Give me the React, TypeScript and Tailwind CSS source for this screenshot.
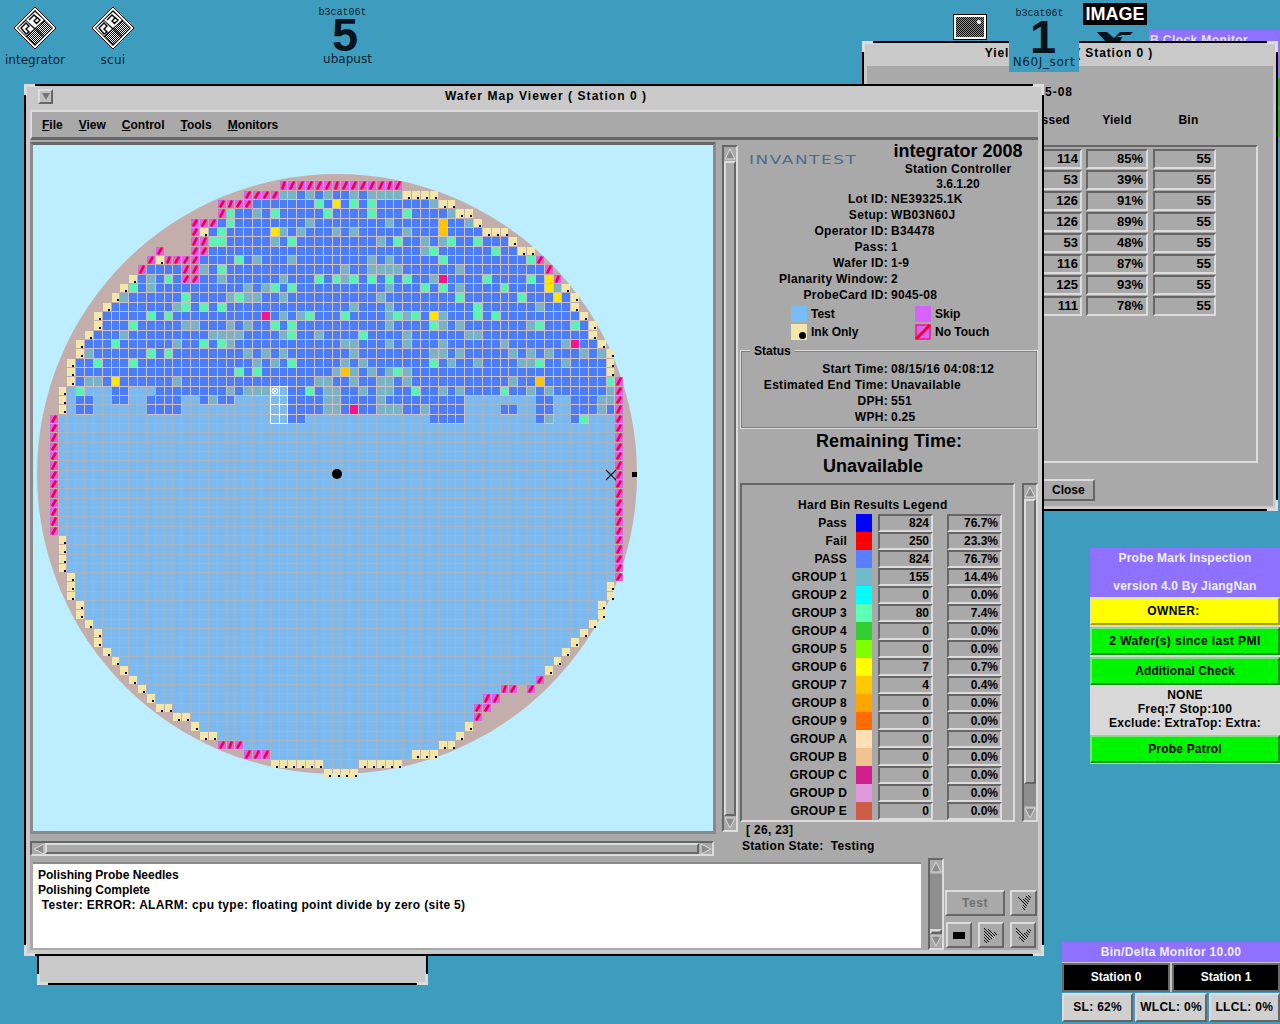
import React from 'react';

const raised = 'border-2 border-t-[#dcdcdc] border-l-[#dcdcdc] border-b-[#666666] border-r-[#666666]';
const sunken = 'border-2 border-t-[#666666] border-l-[#666666] border-b-[#dcdcdc] border-r-[#dcdcdc]';

// Wafer rows: "min max tokens", token = type letter + column or column range
// s skip, i ink, g green, t teal, y yellow, o orange, p pink, l untested, n nothing
const topRows = [
  '26 39 s26-39',
  '22 43 s22-25 t26-27 t29 t31 t34 t36-39 i40-43',
  '19 45 s19-22 g30 y32 g34 g36 t43 i44-45',
  '19 47 s19 g20 t23 g25 g31 g36 g40 t45 i46-47',
  '16 48 s16-18 g20 t29 t38 o44 t47 i48',
  '16 51 s16 i17 g19 y25 t26 t28 t32 t34 t40 o44 i49-51',
  '16 52 s16-17 g18-19 t25 g27 t37 g39 t42 t44 g45 g48 i52',
  '12 54 s12 n13-15 s16-17 t42 g43 g50 i53-54',
  '11 55 s11 i12 s13-16 g21 t23 t27 t36 t38 g44 g54 s55',
  '10 56 s10 s15-16 t17 g19 t33 t36-39 t46 s56',
  '9 57 i9 t11 g13 s15-16 t19 t26 g30 g32 t33 g34 g36 g38 g40 t43 p44 g49 g54 y56 s57',
  '8 58 i8 g9 t11 t22 t24 g25 g27 t38 g42 g44 t46 g51 y56 t57 i58',
  '7 59 i7 t8 g15 t20 g21 t22-23 t26 t37 g46 g53 y57 i59',
  '6 59 i6 t14 g15 g17 g19 t34 t38 g48 t55 i59',
  '5 60 i5 g11 g13 p24 t26 t28 g29 g33 t38 g39 t40 g41 y43 t44 g48 g50 i60',
  '5 61 i5 g9 t15-16 t20 t22 g25 g27 t38 g43 t44 t46 t54 g55 g59 i61',
  '4 61 i4 t8 t18-21 t26 g27 t30 g35 t40 t47-48 i61',
  '3 62 i3 g7 t14 g17 g19 t20 t33-34 t38 t40 t44 t51 t58 p59 i62',
  '3 63 i3 t4 g11 g13 t22 t24 t26 t34 t43-44 t46 t52 t54 t56 t60 t62 i63',
  '2 63 i2 g5 g9 t23 t25 g27 t33 t35 g43 t45 t48 t53-54 g55 t58 i63',
  '2 63 i2 g21 g23 t32 o33 t34 t36 t38 g39 t40 i63',
  '2 64 i2 t4-5 y7 t14 t30-31 t34 t37-38 t40 t52 o55 g63 s64',
  '1 64 i1 l2 g3 l4-6 l9-11 t20 t22-24 l25-26 g29 t31-32 t35 t37-38 g41 t44 t46 g51 t54 t56 t63 s64',
  '1 64 i1 l2 l5-6 l9-10 l15-16 t18 l21-26 t31-32 t37 l47-54 l57-58 t62-63 s64',
  '1 64 i1 l2 l5-10 l15-26 t31-32 p34 t37-39 t42 l47-50 l53-54 l57-58 t62 s64',
  '0 64 s0 l1-26 l29-42 l47-54 t56 l57-58 g60 l61-63 s64',
];

const bottomRows = [
  ...Array(12).fill('0 64 s0 s64'),
  ...Array(4).fill('1 64 i1 s64'),
  '2 64 i2 s64',
  '2 63 i2 i63',
  '2 63 i2 i63',
  '3 62 i3 i62',
  '3 62 i3 i62',
  '4 61 i4 i61',
  '5 60 i5 i60',
  '5 59 i5 i59',
  '6 58 i6 i58',
  '7 57 i7 i57',
  '8 56 i8 i56',
  '9 55 i9 s55',
  '10 54 i10 s51-52 n53 s54',
  '11 50 i11 s49-50',
  '12 49 i12-13 s48-49',
  '14 48 i14-15 s48',
  '16 47 i16 i47',
  '17 46 i17-18 i46',
  '19 45 s19-21 i44-45',
  '22 43 s22-24 i41-43',
  '25 39 i25-30 i35-39',
  '31 34 i31-34',
];

const cellColors: Record<string, string> = {
  b: '#4a7df7',
  l: '#7bb9ee',
  t: '#78b4c6',
  g: '#5cf2b2',
  y: '#ffe600',
  o: '#ffc400',
  p: '#f5148c',
  s: '#d763f2',
  i: '#f2e6a8',
};

const cellX = (k: number) => Math.round(49.7 + 8.84 * k);
const cellY = (r: number) => Math.round(181.3 + 9.33 * r);

type Cell = { r: number; k: number; type: string };

const buildCells = (): Cell[] => {
  const cells: Cell[] = [];
  [...topRows, ...bottomRows].forEach((line, r) => {
    const [min, max, ...tokens] = line.split(' ');
    const types: Record<number, string> = {};
    for (let k = Number(min); k <= Number(max); k++) types[k] = r < topRows.length ? 'b' : 'l';
    tokens.forEach((token) => {
      const [from, to] = token.slice(1).split('-').map(Number);
      for (let k = from; k <= (to ?? from); k++) types[k] = token[0];
    });
    Object.keys(types).forEach((key) => {
      const k = Number(key);
      if (types[k] !== 'n') cells.push({ r, k, type: types[k] });
    });
  });
  return cells;
};

const WaferMap = () => (
  <svg width="680" height="686" viewBox="33 145 680 686" shapeRendering="crispEdges" className="block">
    <rect x="33" y="145" width="680" height="686" fill="#bdeeff" />
    <circle cx="337" cy="474" r="300" fill="#c4aeab" shapeRendering="auto" />
    {buildCells().map(({ r, k, type }) => {
      const x = cellX(k);
      const y = cellY(r);
      const w = cellX(k + 1) - x - 1;
      const h = cellY(r + 1) - y - 1;
      return (
        <g key={`${r}-${k}`}>
          {type === 'l' && <rect x={x} y={y} width={w + 1} height={h + 1} fill="#a4b4c4" />}
          {'btgyop'.includes(type) && <rect x={x} y={y} width={w + 1} height={h + 1} fill="#cdc2c8" />}
          <rect x={x} y={y} width={w} height={h} fill={cellColors[type]} />
          {type === 's' && (
            <line x1={x + 2.5} y1={y + h - 1.5} x2={x + w - 2.5} y2={y + 1.5} stroke="#f50032" strokeWidth="2.6" strokeLinecap="round" shapeRendering="auto" />
          )}
          {type === 'i' && <rect x={x + 5} y={y + 6} width="2" height="2" fill="#000" />}
        </g>
      );
    })}
    {[22, 23, 24, 25].map((r) =>
      [25, 26].map((k) => (
        <rect key={`m${r}-${k}`} x={cellX(k) - 0.5} y={cellY(r) - 0.5} width={cellX(k + 1) - cellX(k)} height={cellY(r + 1) - cellY(r)} fill="none" stroke="#fff" />
      ))
    )}
    <g shapeRendering="auto" stroke="#fff" fill="none">
      <circle cx={cellX(25) + 4} cy={cellY(22) + 4} r="3" />
      <path d={`M${cellX(25) + 2} ${cellY(22) + 2}l4 4m0 -4l-4 4`} />
    </g>
    <circle cx="337" cy="474" r="5" fill="#000" shapeRendering="auto" />
    <path d="M606 470l10 10m0 -10l-10 10" stroke="#0a1a2a" strokeWidth="1.2" fill="none" shapeRendering="auto" />
    <rect x="632" y="472" width="5" height="5" fill="#000" />
  </svg>
);

const Corner = ({ className }: { className: string }) => (
  <div className={`absolute w-[11px] h-[11px] border-[#dcdcdc] ${className}`} />
);

const Triangle = ({ dir }: { dir: 'up' | 'down' | 'left' | 'right' }) => {
  const points = {
    up: '6,1 11,11 1,11',
    down: '1,1 11,1 6,11',
    left: '1,6 11,1 11,11',
    right: '1,1 11,6 1,11',
  }[dir];
  return (
    <svg width="12" height="12" viewBox="0 0 12 12" className="block">
      <polygon points={points} fill="#8c8c8c" stroke="#dcdcdc" strokeWidth="1" />
    </svg>
  );
};

const VScroll = ({ className, variant }: { className: string; variant: 'full' | 'legend' | 'log' }) => (
  <div className={`flex flex-col items-center bg-[#8e8e8e] ${sunken} ${className}`}>
    <div className="h-[14px] w-full flex items-center justify-center bg-[#a9a9a9] shrink-0">
      <Triangle dir="up" />
    </div>
    {variant === 'log' && <div className="flex-1" />}
    <div className={`w-full bg-[#a9a9a9] ${raised} ${variant === 'log' ? 'h-[5px]' : 'flex-1'}`} />
    {variant === 'legend' && <div className="h-[22px]" />}
    <div className="h-[14px] w-full flex items-center justify-center bg-[#a9a9a9] shrink-0">
      <Triangle dir="down" />
    </div>
  </div>
);

const infoRows = [
  ['Lot ID:', 'NE39325.1K'],
  ['Setup:', 'WB03N60J'],
  ['Operator ID:', 'B34478'],
  ['Pass:', '1'],
  ['Wafer ID:', '1-9'],
  ['Planarity Window:', '2'],
  ['ProbeCard ID:', '9045-08'],
];

const statusRows = [
  ['Start Time:', '08/15/16 04:08:12'],
  ['Estimated End Time:', 'Unavailable'],
  ['DPH:', '551'],
  ['WPH:', '0.25'],
];

const legendRows = [
  ['Pass', 'bg-[#0000ff]', '824', '76.7%'],
  ['Fail', 'bg-[#ff0000]', '250', '23.3%'],
  ['PASS', 'bg-[#5a80ff]', '824', '76.7%'],
  ['GROUP 1', 'bg-[#70b8cc]', '155', '14.4%'],
  ['GROUP 2', 'bg-[#00ffff]', '0', '0.0%'],
  ['GROUP 3', 'bg-[#5cffb4]', '80', '7.4%'],
  ['GROUP 4', 'bg-[#32cd32]', '0', '0.0%'],
  ['GROUP 5', 'bg-[#7fff00]', '0', '0.0%'],
  ['GROUP 6', 'bg-[#ffff00]', '7', '0.7%'],
  ['GROUP 7', 'bg-[#ffc800]', '4', '0.4%'],
  ['GROUP 8', 'bg-[#ffa500]', '0', '0.0%'],
  ['GROUP 9', 'bg-[#ff6c00]', '0', '0.0%'],
  ['GROUP A', 'bg-[#ffe0b4]', '0', '0.0%'],
  ['GROUP B', 'bg-[#f0c490]', '0', '0.0%'],
  ['GROUP C', 'bg-[#d0208c]', '0', '0.0%'],
  ['GROUP D', 'bg-[#e09adc]', '0', '0.0%'],
  ['GROUP E', 'bg-[#cd5c48]', '0', '0.0%'],
];

const yieldRows = [
  ['114', '85%'],
  ['53', '39%'],
  ['126', '91%'],
  ['126', '89%'],
  ['53', '48%'],
  ['116', '87%'],
  ['125', '93%'],
  ['111', '78%'],
];

const menuItems = ['File', 'View', 'Control', 'Tools', 'Monitors'];

const InfoPanel = () => (
  <div className="w-[298px] ml-[2px] pt-px flex flex-col">
    <div className="flex h-[50px]">
      <div className="w-[151px] pl-[9px] pt-[11px]">
        <div className="origin-left scale-x-[1.3] font-['DejaVu_Sans',sans-serif] font-normal text-[13px] leading-[15px] tracking-[1.2px] text-[#4a6c90] whitespace-nowrap">
          INVANTEST
        </div>
      </div>
      <div className="w-[134px] flex flex-col items-center whitespace-nowrap">
        <div className="text-[18px] leading-[21px]">integrator 2008</div>
        <div className="leading-[15px] tracking-[0.3px]">Station Controller</div>
        <div className="leading-[14px]">3.6.1.20</div>
      </div>
    </div>
    {infoRows.map(([label, value]) => (
      <div key={label} className="grid grid-cols-[148px_1fr] gap-x-[3px] h-[16px] leading-[16px] tracking-[0.3px]">
        <span className="text-right whitespace-nowrap">{label}</span>
        <span>{value}</span>
      </div>
    ))}
    <div className="grid grid-cols-[124px_124px] ml-[51px] mt-[2px] h-[36px]">
      <div className="flex items-center gap-[4px] h-[18px]">
        <div className="w-[16px] h-[16px] bg-[#78bcf5]" />
        Test
      </div>
      <div className="flex items-center gap-[4px] h-[18px]">
        <div className="w-[16px] h-[16px] bg-[#d763ff]" />
        Skip
      </div>
      <div className="flex items-center gap-[4px] h-[18px]">
        <div className="w-[16px] h-[16px] bg-[#f2e6a8] flex items-end justify-end p-[1px]">
          <div className="w-[7px] h-[7px] rounded-full bg-black" />
        </div>
        Ink Only
      </div>
      <div className="flex items-center gap-[4px] h-[18px]">
        <svg width="16" height="16" viewBox="0 0 16 16" className="block">
          <rect x="1" y="1" width="14" height="14" fill="#d763f2" stroke="#f5148c" strokeWidth="1.5" />
          <line x1="1" y1="15" x2="15" y2="1" stroke="#f50032" strokeWidth="3" />
        </svg>
        No Touch
      </div>
    </div>
    <div className="relative mt-[9px] h-[79px] w-[298px] border border-[#dcdcdc] outline outline-1 outline-offset-[-2px] outline-[#808080] pt-[10px]">
      <span className="absolute left-[9px] top-[-7px] px-[4px] bg-[#a9a9a9] leading-[14px]">Status</span>
      {statusRows.map(([label, value]) => (
        <div key={label} className="grid grid-cols-[147px_1fr] gap-x-[3px] h-[16px] leading-[16px] tracking-[0.3px]">
          <span className="text-right whitespace-nowrap">{label}</span>
          <span>{value}</span>
        </div>
      ))}
    </div>
    <div className="h-[25px] leading-[25px] text-[18px] tracking-[0.1px] pl-[76px] whitespace-nowrap">Remaining Time:</div>
    <div className="h-[25px] leading-[25px] text-[18px] pl-[83px] whitespace-nowrap">Unavailable</div>
    <div className="flex mt-[4px] h-[339px]">
      <div className={`w-[275px] h-full overflow-hidden ${sunken} pt-[12px]`}>
        <div className="h-[17px] leading-[16px] pl-[56px] tracking-[0.3px] whitespace-nowrap">Hard Bin Results Legend</div>
        {legendRows.map(([label, color, count, pct]) => (
          <div key={label} className="flex items-center h-[18px] shrink-0">
            <span className="w-[105px] text-right whitespace-nowrap tracking-[0.2px]">{label}</span>
            <div className={`ml-[9px] w-[16px] h-[18px] ${color}`} />
            <div className={`ml-[6px] w-[55px] h-[18px] text-right pr-[2px] leading-[14px] ${sunken}`}>{count}</div>
            <div className={`ml-[14px] w-[55px] h-[18px] text-right pr-[2px] leading-[14px] ${sunken}`}>{pct}</div>
          </div>
        ))}
      </div>
      <VScroll variant="legend" className="ml-[7px] w-[16px] h-full" />
    </div>
    <div className="h-[16px] leading-[16px] pl-[6px] tracking-[0.3px]">[ 26, 23]</div>
    <div className="h-[17px] leading-[17px] pl-[2px] whitespace-pre tracking-[0.3px]">Station State:  Testing</div>
  </div>
);

// Stippled button glyphs: a hatch filled polygon
const HatchIcon = ({ id, points }: { id: string; points: string }) => (
  <svg width="22" height="22" viewBox="0 0 22 22" shapeRendering="crispEdges" className="block">
    <defs>
      <pattern id={id} width="3" height="3" patternUnits="userSpaceOnUse">
        <rect x="0" y="0" width="1" height="1" fill="#000" />
        <rect x="1" y="1" width="1" height="1" fill="#000" />
        <rect x="2" y="2" width="1" height="1" fill="#000" />
      </pattern>
    </defs>
    <polygon points={points} fill={`url(#${id})`} />
  </svg>
);

const MainWindow = () => (
  <div className="absolute left-[24px] top-[84px] w-[1020px] h-[872px] border-2 border-black bg-[#c9c9c9] px-[4px] flex flex-col">
    <Corner className="left-[-2px] top-[-2px] border-l-[3px] border-t-[3px]" />
    <Corner className="left-[-2px] bottom-[-2px] border-l-[3px] border-b-[3px]" />
    <Corner className="right-[-2px] top-[-2px] border-r-[3px] border-t-[3px]" />
    <Corner className="right-[-2px] bottom-[-2px] border-r-[3px] border-b-[3px]" />
    <div className="relative h-[22px] flex items-center justify-center pl-[24px] pb-[3px] tracking-[1.05px] whitespace-nowrap shrink-0">
      <div className={`absolute left-[8px] top-[3px] w-[15px] h-[15px] bg-[#c0c0c0] ${raised} flex items-center justify-center`}>
        <span className="w-0 h-0 border-l-[4px] border-r-[4px] border-t-[7px] border-l-transparent border-r-transparent border-t-[#777777]" />
      </div>
      Wafer Map Viewer ( Station 0 )
    </div>
    <div className="mt-[2px] h-[30px] shrink-0 bg-[#a9a9a9] border-t-2 border-t-[#dcdcdc] border-b-[3px] border-b-[#666666] border-l-2 border-l-[#dcdcdc] flex items-center pl-[10px] gap-[16px]">
      {menuItems.map((item) => (
        <span key={item}>
          <span className="underline">{item[0]}</span>
          {item.slice(1)}
        </span>
      ))}
    </div>
    <div className="flex h-[718px] bg-[#a9a9a9] shrink-0">
      <div className="w-[692px] pt-[2px] flex flex-col">
        <div className="w-[686px] h-[692px] border-[3px] border-t-[#666666] border-l-[#8a8a8a] border-b-[#8a8a8a] border-r-[#8a8a8a]">
          <WaferMap />
        </div>
        <div className={`mt-[7px] w-[684px] h-[15px] flex bg-[#a9a9a9] ${sunken}`}>
          <div className="w-[13px] flex items-center justify-center"><Triangle dir="left" /></div>
          <div className={`flex-1 ${raised}`} />
          <div className="w-[13px] flex items-center justify-center"><Triangle dir="right" /></div>
        </div>
      </div>
      <VScroll variant="full" className="mt-[5px] w-[16px] h-[687px]" />
      <InfoPanel />
    </div>
    <div className="flex h-[92px] bg-[#a9a9a9] shrink-0">
      <div className="ml-[3px] mt-[4px] w-[888px] h-[86px] bg-white pl-[5px] pt-[4px] leading-[15px] whitespace-pre border-t-2 border-t-[#8a8a8a]">
        <div>Polishing Probe Needles</div>
        <div>Polishing Complete</div>
        <div className="tracking-[0.32px]"> Tester: ERROR: ALARM: cpu type: floating point divide by zero (site 5)</div>
      </div>
      <VScroll variant="log" className="ml-[7px] w-[16px] h-[92px]" />
      <div className="ml-px mt-[32px] flex flex-col gap-[6px]">
        <div className="flex gap-[5px]">
          <div className={`w-[60px] h-[26px] flex items-center justify-center text-[#707070] tracking-[0.5px] ${raised}`}>Test</div>
          <div className={`w-[27px] h-[26px] flex items-center justify-center ${raised}`}>
            <HatchIcon id="hatch-a" points="3,4 10,7 15,3 19,4 12,18 9,18 10,11" />
          </div>
        </div>
        <div className="flex gap-[6px] pl-px">
          <div className={`w-[26px] h-[26px] flex items-center justify-center ${raised}`}>
            <div className="w-[12px] h-[7px] bg-black" />
          </div>
          <div className={`w-[26px] h-[26px] flex items-center justify-center ${raised}`}>
            <HatchIcon id="hatch-b" points="4,3 18,10 7,19 4,17" />
          </div>
          <div className={`w-[26px] h-[26px] flex items-center justify-center ${raised}`}>
            <HatchIcon id="hatch-c" points="3,4 6,4 11,10 17,4 20,5 12,19 9,18" />
          </div>
        </div>
      </div>
    </div>
  </div>
);

const YieldWindow = () => (
  <div className="absolute left-[862px] top-[41px] w-[416px] h-[470px] border-2 border-black bg-[#c9c9c9] px-[3px] flex flex-col">
    <Corner className="left-[-2px] top-[-2px] border-l-[3px] border-t-[3px]" />
    <Corner className="right-[-2px] top-[-2px] border-r-[3px] border-t-[3px]" />
    <Corner className="right-[-2px] bottom-[-2px] border-r-[3px] border-b-[3px]" />
    <div className="h-[23px] flex items-center justify-center pb-[3px] pr-[2px] tracking-[0.9px] whitespace-nowrap shrink-0">
      Yield Monitor ( Station 0 )
    </div>
    <div className="flex-1 bg-[#a9a9a9] mb-[3px] pt-[18px] relative">
      <div className="h-[16px] leading-[16px] text-right pr-[200px] tracking-[1px]">9045-08</div>
      <div className="flex h-[16px] mt-[12px] leading-[16px] pl-[155px] tracking-[0.3px]">
        <span className="w-[60px] text-right pr-[12px]">Passed</span>
        <span className="w-[62px] ml-[4px] text-center">Yield</span>
        <span className="w-[63px] ml-[9px] text-center">Bin</span>
      </div>
      <div className={`ml-[13px] mt-[17px] w-[378px] h-[318px] ${sunken} pl-[140px] pt-[2px] flex flex-col gap-px`}>
        {yieldRows.map(([count, pct], i) => (
          <div key={i} className="flex h-[20px]">
            <div className={`w-[60px] text-right pr-[2px] leading-[16px] text-[13px] ${sunken}`}>{count}</div>
            <div className={`w-[62px] ml-[4px] text-right pr-[3px] leading-[16px] text-[13px] ${sunken}`}>{pct}</div>
            <div className={`w-[63px] ml-[5px] text-right pr-[3px] leading-[16px] text-[13px] ${sunken}`}>55</div>
          </div>
        ))}
      </div>
      <div className={`ml-[150px] mt-[16px] w-[78px] h-[22px] pl-[33px] leading-[18px] ${raised}`}>Close</div>
    </div>
  </div>
);

const DiamondIcon = ({ id }: { id: string }) => (
  <svg width="44" height="44" viewBox="0 0 44 44" className="block">
    <defs>
      <pattern id={id} width="2" height="2" patternUnits="userSpaceOnUse">
        <rect width="2" height="2" fill="#fff" />
        <rect width="1" height="1" fill="#000" />
        <rect x="1" y="1" width="1" height="1" fill="#000" />
      </pattern>
    </defs>
    <polygon points="22,1 43,22 22,43 1,22" fill="#fff" stroke="#000" strokeWidth="1" />
    <polygon points="22,4 40,22 22,40 4,22" fill="#000" />
    <polygon points="22,6 31,14 22,22 13,14" fill="#fff" />
    <path d="M16 14l5-5 3 3-3 3 3 3M21 9l6 5-4 4" fill="none" stroke="#000" strokeWidth="1.4" />
    <polygon points="32,15 39,22 31,30 23,22" fill={`url(#${id})`} />
    <polygon points="13,15 21,23 13,30 5,22" fill="#fff" />
    <path d="M8 22l5-5 3 3-3 3 3 3-3 2z" fill="none" stroke="#000" strokeWidth="1.4" />
    <polygon points="22,23 30,31 22,38 14,31" fill={`url(#${id})`} />
  </svg>
);

const iconLabel = "font-['DejaVu_Sans',sans-serif] font-normal text-[12px] leading-[14px] text-[#0c2230] whitespace-nowrap";
const hostLabel = "font-['Liberation_Mono',monospace] font-normal text-[10px] leading-[10px] text-[#0c2230]";

const DesktopIcons = () => (
  <>
    <div className="absolute left-[5px] top-[6px] w-[60px] flex flex-col items-center gap-[3px]">
      <DiamondIcon id="dither-a" />
      <span className={iconLabel}>integrator</span>
    </div>
    <div className="absolute left-[91px] top-[6px] w-[44px] flex flex-col items-center gap-[3px]">
      <DiamondIcon id="dither-b" />
      <span className={`${iconLabel} tracking-[0.3px]`}>scui</span>
    </div>
    <div className="absolute left-[305px] top-[8px] w-[80px] flex flex-col items-center">
      <span className={`${hostLabel} mr-[5px]`}>b3cat06t</span>
      <span className="text-[47px] leading-[34px] h-[34px] text-[#06121c]">5</span>
      <span className={`${iconLabel} ml-[5px]`}>ubapust</span>
    </div>
    <div className="absolute left-[954px] top-[15px] w-[32px] h-[24px] border-2 border-white bg-[repeating-conic-gradient(#000_0_25%,#999_0_50%)] bg-[length:2px_2px] outline outline-1 outline-black">
      <div className="absolute right-[3px] top-[3px] w-[4px] h-[4px] rounded-full bg-white" />
    </div>
    <div className="absolute left-[1083px] top-[3px] w-[64px] h-[22px] bg-black text-white text-[18px] leading-[22px] text-center">
      IMAGE
    </div>
  </>
);

const Desktop = () => (
  <div className="relative w-[1280px] h-[1024px] overflow-hidden bg-[#3e9dbf] font-['Liberation_Sans',sans-serif] font-bold text-[12px] text-black">
    <div className="absolute left-[1149px] top-[30px] w-[131px] h-[110px] bg-[#8e72ff] flex flex-col overflow-hidden">
      <div className="h-[48px] ml-[-6px] pt-px leading-[18px] text-[#e4e4e4] whitespace-nowrap tracking-[0.4px]">2B Clock Monitor</div>
      <div className="h-[29px] bg-[#22b020]" />
      <div className="h-[29px] mt-px bg-[#22b020]" />
    </div>
    <svg width="40" height="10" viewBox="0 0 40 10" className="absolute left-[1095px] top-[32px]">
      <path d="M2 0h10l7 6 6-6h13l-3 3h-8l-6 2h6l-2 5h-14z" fill="#06121c" />
    </svg>
    <YieldWindow />
    <div className="absolute left-[37px] top-[950px] w-[391px] h-[35px] border-2 border-black bg-[#c9c9c9]">
      <Corner className="left-[-2px] bottom-[-2px] border-l-[3px] border-b-[3px]" />
      <Corner className="right-[-2px] bottom-[-2px] border-r-[3px] border-b-[3px]" />
    </div>
    <MainWindow />
    <DesktopIcons />
    <div className="absolute left-[1009px] top-[5px] w-[70px] h-[67px] bg-[#3e9dbf] overflow-hidden flex flex-col items-center pt-[4px]">
      <span className={`${hostLabel} mr-[9px]`}>b3cat06t</span>
      <span className="text-[47px] leading-[36px] h-[36px] mr-[2px] text-[#06121c]">1</span>
      <span className={`${iconLabel} tracking-[0.6px]`}>N60J_sort</span>
    </div>
    <div className="absolute left-[1090px] top-[548px] w-[190px] h-[216px] bg-[#d8d8d8] flex flex-col">
      <div className="h-[49px] bg-[#8e72ff] text-[#f0f0f0] text-center leading-[20px] tracking-[0.2px]">
        <div>Probe Mark Inspection</div>
        <div className="mt-[8px]">version 4.0 By JiangNan</div>
      </div>
      <div className="h-[28px] bg-[#ffff00] text-center leading-[24px] pr-[23px] tracking-[0.4px] border-2 border-t-[#e8e8a0] border-l-[#e8e8a0] border-b-[#aaa000] border-r-[#aaa000]">OWNER:</div>
      <div className="h-[2px]" />
      <div className="h-[28px] bg-[#00f600] text-center leading-[24px] tracking-[0.45px] border-2 border-t-[#80e080] border-l-[#80e080] border-b-[#009000] border-r-[#009000]">2 Wafer(s) since last PMI</div>
      <div className="h-[2px]" />
      <div className="h-[28px] bg-[#00f600] text-center leading-[24px] tracking-[0.1px] border-2 border-t-[#80e080] border-l-[#80e080] border-b-[#009000] border-r-[#009000]">Additional Check</div>
      <div className="h-[50px] text-center leading-[14px] pt-[3px] tracking-[0.25px]">
        <div>NONE</div>
        <div>Freq:7 Stop:100</div>
        <div>Exclude: ExtraTop: Extra:</div>
      </div>
      <div className="h-[28px] bg-[#00f600] text-center leading-[24px] tracking-[0.2px] border-2 border-t-[#80e080] border-l-[#80e080] border-b-[#009000] border-r-[#009000]">Probe Patrol</div>
    </div>
    <div className="absolute left-[1062px] top-[942px] w-[218px] h-[82px] bg-[#c8c8c8] flex flex-col">
      <div className="h-[20px] bg-[#8e72ff] text-[#f0f0f0] text-center leading-[20px] tracking-[0.35px]">Bin/Delta Monitor 10.00</div>
      <div className="flex h-[30px] gap-[2px] pt-px">
        <div className="flex-1 bg-black text-white text-center leading-[24px] border-2 border-[#6a6a6a]">Station 0</div>
        <div className="flex-1 bg-black text-white text-center leading-[24px] border-2 border-[#6a6a6a]">Station 1</div>
      </div>
      <div className="flex flex-1 gap-[2px] pb-[2px] pt-px bg-[#3e9dbf]">
        <div className={`flex-1 bg-[#d0d0d0] text-center leading-[24px] tracking-[0.3px] ${raised}`}>SL: 62%</div>
        <div className={`flex-1 bg-[#d0d0d0] text-center leading-[24px] tracking-[0.3px] ${raised}`}>WLCL: 0%</div>
        <div className={`flex-1 bg-[#d0d0d0] text-center leading-[24px] tracking-[0.3px] ${raised}`}>LLCL: 0%</div>
      </div>
    </div>
  </div>
);

export default function App() {
  return <Desktop />;
}
